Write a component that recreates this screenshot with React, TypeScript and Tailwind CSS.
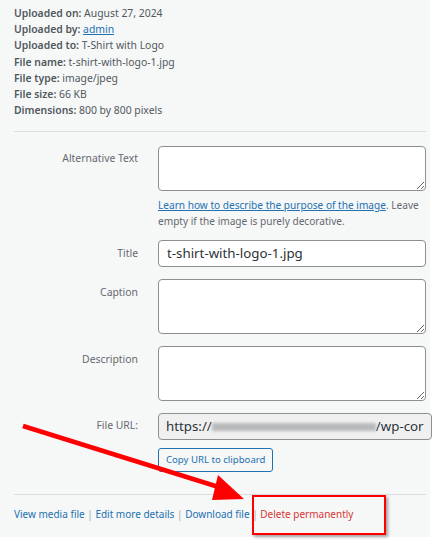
export default function App() {
  const meta: [string, string, boolean?][] = [
    ['Uploaded on:', 'August 27, 2024'],
    ['Uploaded by:', 'admin', true],
    ['Uploaded to:', 'T-Shirt with Logo'],
    ['File name:', 't-shirt-with-logo-1.jpg'],
    ['File type:', 'image/jpeg'],
    ['File size:', '66 KB'],
    ['Dimensions:', '800 by 800 pixels'],
  ]

  return (
    <div className="h-[541px] w-[432px] bg-white" style={{ fontFamily: '"Noto Sans", "Open Sans", sans-serif' }}>
      <div className="relative h-[537px] w-[430px] bg-[#f6f7f7] pl-[14px] pr-[4px] text-[10.4px] text-[#50575e]">
        {/* File meta */}
        <div className="pt-[5px] pb-[13px]">
          {meta.map(([label, value, link]) => (
            <div key={label} className="h-[16.2px] leading-[16px]">
              <strong className="font-semibold">{label}</strong>{' '}
              {link ? <a className="text-[#2271b1] underline">{value}</a> : value}
            </div>
          ))}
        </div>

        <div className="border-t border-[#dcdcde] pt-[14px]">
          {/* Alt text */}
          <div className="flex gap-[20px]">
            <label className="w-[124px] shrink-0 pt-[5px] text-right text-[#646970]">Alternative Text</label>
            <div className="flex-1">
              <textarea readOnly className="block h-[45px] w-full rounded-[4px] border border-[#8c8f94] bg-white" />
              <p className="mt-[6px] text-[10.1px] leading-[16px] text-[#646970]">
                <a className="text-[#2271b1] underline">Learn how to describe the purpose of the image</a>. Leave
                empty if the image is purely decorative.
              </p>
            </div>
          </div>

          {/* Title */}
          <div className="mt-[11px] flex gap-[20px]">
            <label className="w-[124px] shrink-0 pt-[6px] text-right text-[#646970]">Title</label>
            <div className="flex h-[27px] flex-1 items-center rounded-[4px] border border-[#8c8f94] bg-white px-[8px] text-[13.3px] text-[#2c3338]">
              t-shirt-with-logo-1.jpg
            </div>
          </div>

          {/* Caption */}
          <div className="mt-[12px] flex gap-[20px]">
            <label className="w-[124px] shrink-0 pt-[6px] text-right text-[#646970]">Caption</label>
            <textarea readOnly className="block h-[55px] flex-1 rounded-[4px] border border-[#8c8f94] bg-white" />
          </div>

          {/* Description */}
          <div className="mt-[12px] flex gap-[20px]">
            <label className="w-[124px] shrink-0 pt-[6px] text-right text-[#646970]">Description</label>
            <textarea readOnly className="block h-[55px] flex-1 rounded-[4px] border border-[#8c8f94] bg-white" />
          </div>

          {/* File URL */}
          <div className="mt-[12px] flex gap-[20px]">
            <label className="w-[124px] shrink-0 pt-[5px] text-right text-[#646970]">File URL:</label>
            <div className="flex-1">
              <div className="flex h-[27px] items-center overflow-hidden whitespace-nowrap rounded-[4px] border border-[#8c8f94] bg-[#f0f0f1] px-[7px] text-[13.3px] text-[#2c3338]">
                https://
                <span className="inline-block h-[8px] w-[164px] shrink-0 bg-[#b8b9bb] blur-[1.5px]" />
                /wp-cor
              </div>
              <button className="mt-[8px] h-[24px] rounded-[3px] border border-[#2271b1] bg-[#f6f7f7] px-[7px] text-[9.6px] text-[#2271b1]">
                Copy URL to clipboard
              </button>
            </div>
          </div>
        </div>

        {/* Actions */}
        <div className="mt-[22px] border-t border-[#dcdcde] pt-[12px] text-[10px]">
          <a className="text-[#2271b1]">View media file</a>
          <span className="text-[#a7aaad]"> | </span>
          <a className="text-[#2271b1]">Edit more details</a>
          <span className="text-[#a7aaad]"> | </span>
          <a className="text-[#2271b1]">Download file</a>
          <span className="text-[#a7aaad]"> | </span>
          <a className="text-[#d63638]">Delete permanently</a>
        </div>

        {/* Annotation box */}
        <div className="absolute left-[252px] top-[495px] h-[40px] w-[134px] border-[2.5px] border-[#ff0000] shadow-[2px_2px_3px_rgba(0,0,0,0.35)]" />

        {/* Annotation arrow */}
        <svg className="pointer-events-none absolute left-0 top-0" width="430" height="537">
          <line x1="23" y1="426" x2="225" y2="489" stroke="#ff0000" strokeWidth="4.5" />
          <polygon points="244,499 218,475 212,500" fill="#ff0000" />
        </svg>
      </div>
    </div>
  )
}
